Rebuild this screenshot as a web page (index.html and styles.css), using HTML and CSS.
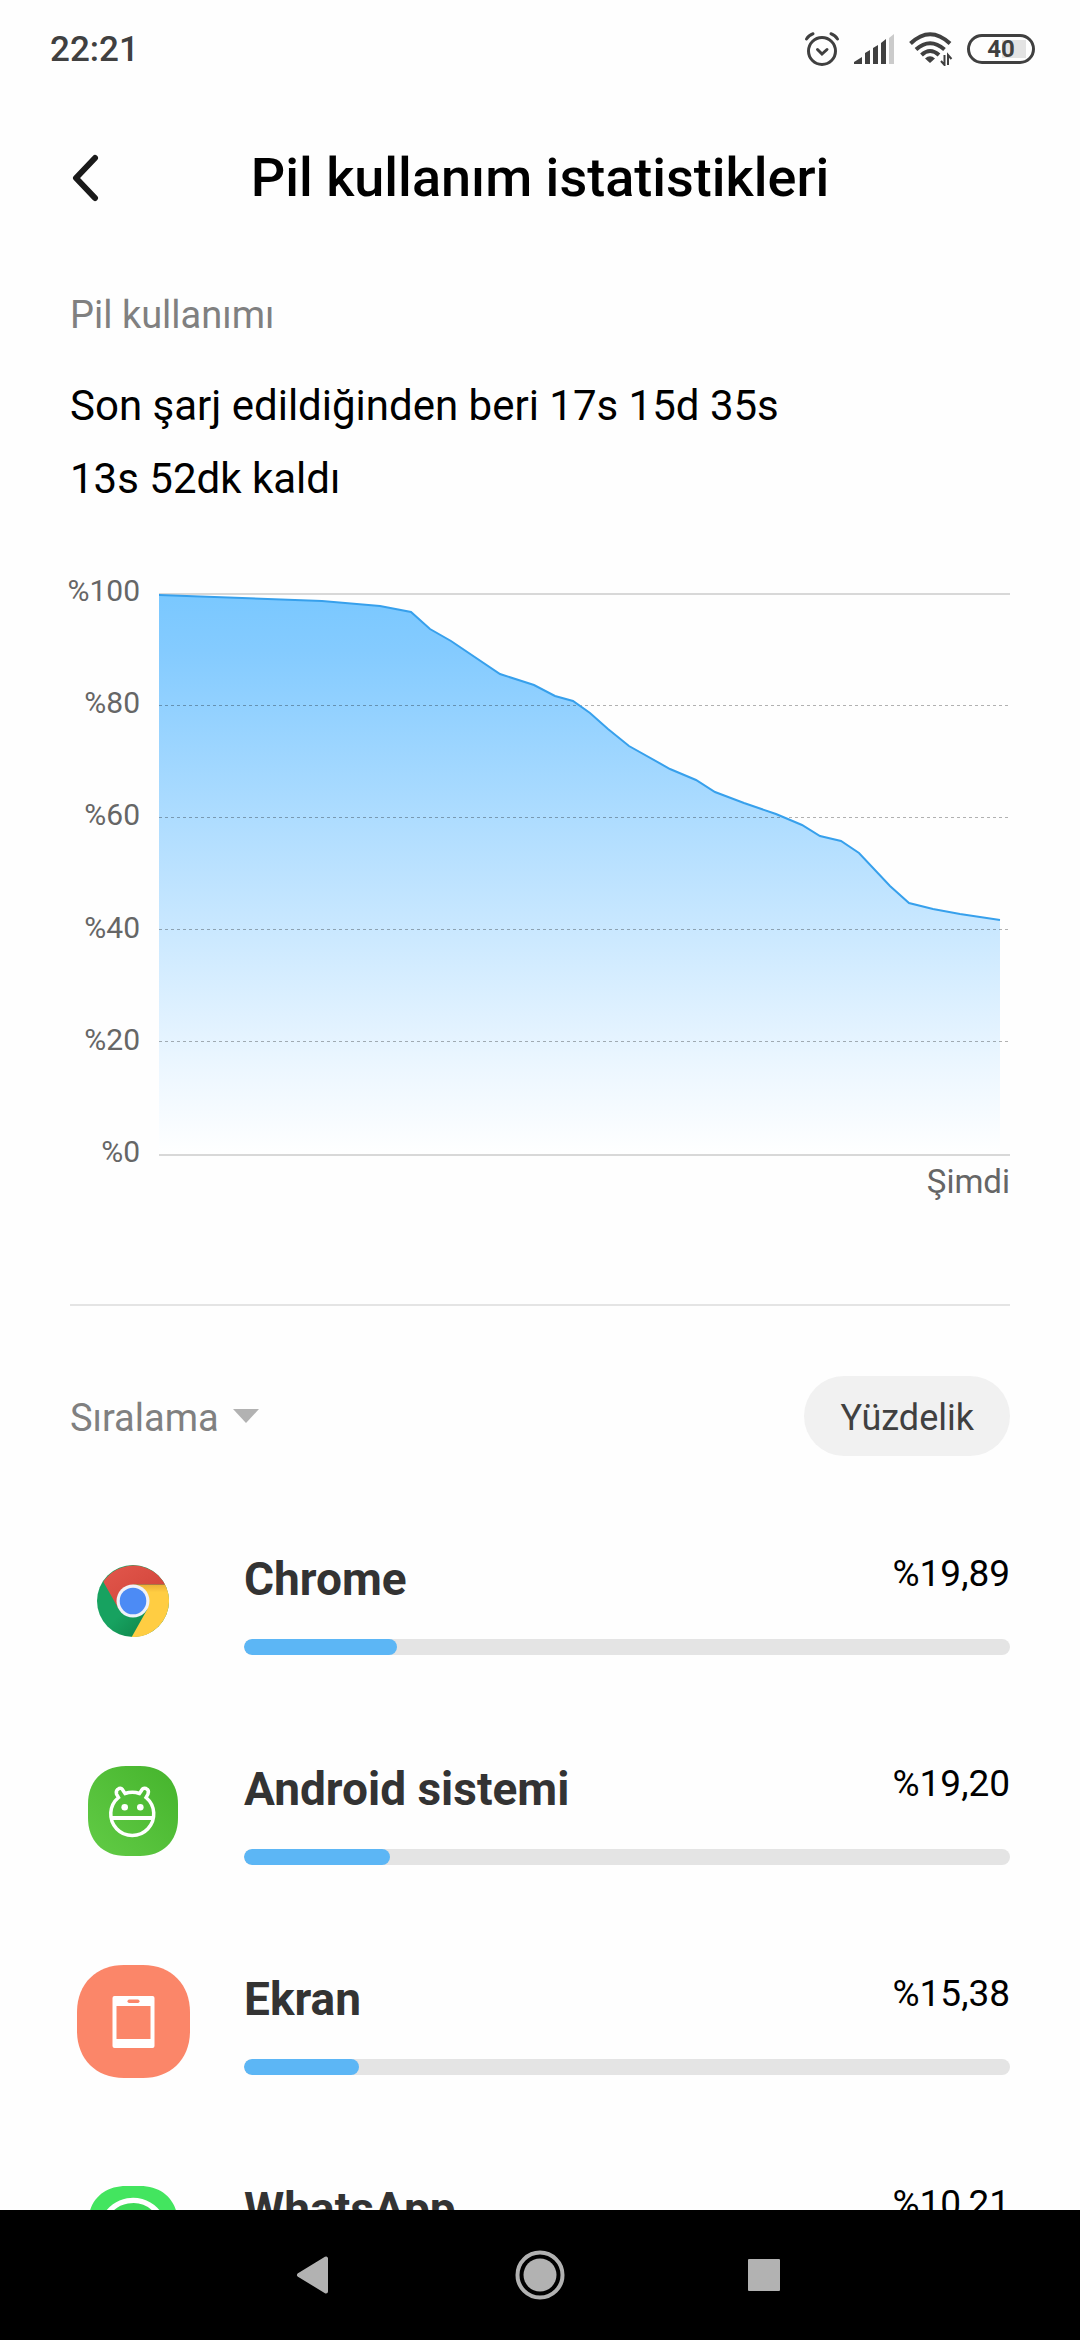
FILE: index.html
```html
<!DOCTYPE html>
<html lang="tr">
<head>
    <meta charset="UTF-8">
    <meta name="viewport" content="width=device-width, initial-scale=1.0">
    <title>Pil kullanım istatistikleri</title>
    <link rel="stylesheet" href="styles.css">
</head>
<body>
<div class="status-bar">
    <span class="clock">22:21</span>
    <div class="status-icons">
        <svg width="36" height="36" viewBox="0 0 36 36" fill="none" stroke="#404040" stroke-width="3" stroke-linecap="round">
            <circle cx="18" cy="20" r="13.5"/>
            <path d="M13.5 18.5l4.5 4.5 5-4.5M2.5 8Q5 4 9 2.8M27 2.8Q31 4 33.5 8"/>
        </svg>
        <svg width="41" height="30" viewBox="0 0 41 30" fill="#404040">
            <path d="M0 30v-2l8-5v7zM11 30V19l5-3v14zM19 30V14l5-3v19zM27 30V9l5-4v25z"/>
            <path d="M35 30V4l5-4v30z" fill="#cbcbcb"/>
        </svg>
        <svg width="44" height="34" viewBox="0 0 44 34" fill="none" stroke="#404040" stroke-width="4">
            <path d="M1.5 11.5Q21 -7 41 11.5M7 17.5Q21 5 35.5 17.5M12.5 23Q21 15 30 23"/>
            <path d="M21 31l-5-4.5Q21 22 26 26.500z" fill="#404040" stroke="none"/>
            <path d="M35.5 23v10l-3.500-4M39 33V23l3.500 4" stroke-width="2"/>
        </svg>
        <span class="battery">40</span>
    </div>
</div>

<header class="header">
    <button class="back" aria-label="Geri">
        <svg width="32" height="48" viewBox="0 0 32 48" fill="none" stroke="#1a1a1a" stroke-width="6" stroke-linecap="round" stroke-linejoin="round">
            <path d="M25 4L6 24l19 20"/>
        </svg>
    </button>
    <h1>Pil kullanım istatistikleri</h1>
</header>

<main class="content">
    <h2 class="section-title">Pil kullanımı</h2>
    <p class="summary">Son şarj edildiğinden beri 17s 15d 35s<br>13s 52dk kaldı</p>

    <div class="chart">
        <div class="chart-labels">
            <span>%100</span>
            <span>%80</span>
            <span>%60</span>
            <span>%40</span>
            <span>%20</span>
            <span>%0</span>
        </div>
        <svg class="plot" viewBox="0 0 851 563" preserveAspectRatio="none">
            <defs>
                <linearGradient id="fill" x1="0" y1="0" x2="0" y2="1">
                    <stop offset="0" stop-color="#7ac8ff"/>
                    <stop offset="0.1" stop-color="#84cbff"/>
                    <stop offset="0.6" stop-color="#cae8ff"/>
                    <stop offset="0.85" stop-color="#edf7ff"/>
                    <stop offset="1" stop-color="#ffffff"/>
                </linearGradient>
            </defs>
            <path class="axis" d="M0 1H851"/>
            <path fill="url(#fill)" d="M0 2L163 8 221 13 252 19 271 36 292 48 341 81 375 92 396 103 414 108 431 120 449 136 470 153 511 176 537 187 556 199 585 210 617 221 643 232 661 243 682 248 700 260 731 293 750 310 774 316 801 321 841 327V562H0z"/>
            <path class="grid" d="M0 112.5H851M0 224.5H851M0 336.5H851M0 448.5H851"/>
            <path class="axis" d="M0 562H851"/>
            <path class="level" d="M0 2L163 8 221 13 252 19 271 36 292 48 341 81 375 92 396 103 414 108 431 120 449 136 470 153 511 176 537 187 556 199 585 210 617 221 643 232 661 243 682 248 700 260 731 293 750 310 774 316 801 321 841 327"/>
        </svg>
    </div>
    <p class="now">Şimdi</p>

    <div class="toolbar">
        <label class="sort">
            <select aria-label="Sıralama">
                <option>Sıralama</option>
            </select>
            <svg width="26" height="14" viewBox="0 0 26 14"><path d="M0 0h26L13 14z" fill="#b2b2b2"/></svg>
        </label>
        <button class="mode">Yüzdelik</button>
    </div>

    <ul class="apps">
        <li class="app">
            <div class="app-icon">
                <svg width="72" height="72" viewBox="0 0 72 72">
                    <defs>
                        <linearGradient id="redShade" x1="0" y1="0" x2="1" y2="1">
                            <stop offset="0" stop-color="#e2574c"/>
                            <stop offset="1" stop-color="#cf4237"/>
                        </linearGradient>
                        <linearGradient id="greenShade" x1="0" y1="0" x2="1" y2="1">
                            <stop offset="0.5" stop-color="#17a260"/>
                            <stop offset="0.9" stop-color="#0d7f46"/>
                        </linearGradient>
                        <linearGradient id="yellowShade" x1="0" y1="0" x2="0" y2="1">
                            <stop offset="0" stop-color="#eab036"/>
                            <stop offset="0.15" stop-color="#ffcd42"/>
                        </linearGradient>
                    </defs>
                    <circle cx="36" cy="36" r="36" fill="url(#greenShade)"/>
                    <path d="M36 19.5H68A36 36 0 0 1 34.7 72L50.3 44.3 36 36z" fill="url(#yellowShade)"/>
                    <path d="M6.3 16.7A36 36 0 0 1 68 19.5H36V36L21.7 44z" fill="url(#redShade)"/>
                    <circle cx="36" cy="36" r="16.5" fill="#f0f2f8"/>
                    <circle cx="36" cy="36" r="13.3" fill="#4c8bf5"/>
                </svg>
            </div>
            <div class="app-info">
                <div class="app-text"><span class="name">Chrome</span><span class="percent">%19,89</span></div>
                <div class="bar"><div class="bar-fill" style="width: 20%"></div></div>
            </div>
        </li>
        <li class="app">
            <div class="app-icon">
                <svg width="90" height="90" viewBox="0 0 90 90">
                    <defs>
                        <linearGradient id="green" x1="0" y1="1" x2="1" y2="0">
                            <stop offset="0.1" stop-color="#5fc943"/>
                            <stop offset="0.9" stop-color="#48b62f"/>
                        </linearGradient>
                    </defs>
                    <path d="M38 0H52C76 0 90 16 90 38V52C90 76 74 90 52 90H38C14 90 0 74 0 52V38C0 14 16 0 38 0z" fill="url(#green)"/>
                    <g fill="none" stroke="#fff" stroke-width="3.5">
                        <path d="M30.5 31.5L28.5 28Q27.5 24 31 22.5 34 21.5 35 24.5L37 27.5Q44.5 25 51.5 27.5L53.5 24.5Q55 21.5 58 22.5 61.5 24 60 28L58 31.5A21.5 21.5 0 1 1 30.5 31.5z"/>
                        <path d="M23 52H66" stroke-width="4"/>
                    </g>
                    <circle cx="36.7" cy="41.3" r="3.3" fill="#fff"/>
                    <circle cx="52.3" cy="41.3" r="3.3" fill="#fff"/>
                </svg>
            </div>
            <div class="app-info">
                <div class="app-text"><span class="name">Android sistemi</span><span class="percent">%19,20</span></div>
                <div class="bar"><div class="bar-fill" style="width: 19%"></div></div>
            </div>
        </li>
        <li class="app">
            <div class="app-icon">
                <svg width="113" height="113" viewBox="0 0 113 113">
                    <path d="M47 0H66C95 0 113 20 113 47V66C113 95 93 113 66 113H47C18 113 0 93 0 66V47C0 18 20 0 47 0z" fill="#fb8669"/>
                    <rect x="35.5" y="31" width="42" height="52" rx="2" fill="#fff"/>
                    <rect x="39.5" y="41" width="34" height="33" fill="#fb8669"/>
                    <rect x="50.5" y="34.5" width="12" height="3.5" rx="1.7" fill="#fb8669"/>
                </svg>
            </div>
            <div class="app-info">
                <div class="app-text"><span class="name">Ekran</span><span class="percent">%15,38</span></div>
                <div class="bar"><div class="bar-fill" style="width: 15%"></div></div>
            </div>
        </li>
        <li class="app">
            <div class="app-icon">
                <svg width="90" height="90" viewBox="0 0 90 90">
                    <path d="M38 0H52C76 0 90 16 90 38V52C90 76 74 90 52 90H38C14 90 0 74 0 52V38C0 14 16 0 38 0z" fill="#43e55f"/>
                    <path d="M18 62A31.5 31.5 0 1 1 29 73L14 77z" fill="#3ddb57" stroke="#fff" stroke-width="5.5"/>
                    <path d="M33 30c-6 5-4 14 4 22s18 12 23 6c3-5 0-6-6-9-3-1-4 4-6 4-4-1-9-6-10-10 0-2 4-3 3-6-2-5-4-9-8-7z" fill="#fff"/>
                </svg>
            </div>
            <div class="app-info">
                <div class="app-text"><span class="name">WhatsApp</span><span class="percent">%10,21</span></div>
                <div class="bar"><div class="bar-fill" style="width: 10%"></div></div>
            </div>
        </li>
    </ul>
</main>

<nav class="nav-bar">
    <button aria-label="Geri">
        <svg width="56" height="56" viewBox="0 0 56 56"><path d="M11 28L38 11.5V44.5z" fill="#b2b2b2" stroke="#b2b2b2" stroke-width="4" stroke-linejoin="round"/></svg>
    </button>
    <button aria-label="Ana ekran">
        <svg width="56" height="56" viewBox="0 0 56 56"><circle cx="28" cy="28" r="22.5" fill="none" stroke="#b2b2b2" stroke-width="4"/><circle cx="28" cy="28" r="16.5" fill="#b2b2b2"/></svg>
    </button>
    <button aria-label="Son uygulamalar">
        <svg width="56" height="56" viewBox="0 0 56 56"><rect x="12" y="12" width="32" height="32" rx="1" fill="#b2b2b2"/></svg>
    </button>
</nav>
</body>
</html>
```
FILE: styles.css
```css
* {
    box-sizing: border-box;
}
html, body {
    height: 100%;
    margin: 0;
    padding: 0;
}
body {
    display: flex;
    flex-direction: column;
    overflow: hidden;
    background-color: #fefefe;
    color: #000;
    font-family: Roboto, sans-serif;
}
h1, h2, p, ul {
    margin: 0;
    padding: 0;
}
button, select {
    border: none;
    background: none;
    padding: 0;
    font-family: inherit;
}
svg {
    display: block;
}

.status-bar {
    display: flex;
    flex-shrink: 0;
    align-items: center;
    justify-content: space-between;
    height: 98px;
    padding: 0 45px 0 50px;
    color: #404040;
}
.clock {
    font-size: 35px;
    font-weight: 500;
}
.status-icons {
    display: flex;
    align-items: center;
    gap: 14px;
}
.battery {
    width: 68px;
    height: 30px;
    border: 3px solid #404040;
    border-radius: 15px;
    background: linear-gradient(#e3e3e3, #e3e3e3) 32px 3px / 24px 18px no-repeat;
    font-size: 24px;
    font-weight: 700;
    line-height: 24px;
    text-align: center;
}

.header {
    display: grid;
    flex-shrink: 0;
    grid-template-columns: 60px 1fr 60px;
    align-items: center;
    height: 159px;
    padding: 0 70px;
}
.header h1 {
    font-size: 54px;
    font-weight: 500;
    text-align: center;
}

.content {
    flex: 1;
    min-height: 0;
    overflow-y: auto;
    scrollbar-width: none;
    padding: 30px 70px 0;
}
.section-title {
    color: #808080;
    font-size: 38px;
    font-weight: 400;
    line-height: 56px;
}
.summary {
    margin-top: 26px;
    font-size: 42px;
    line-height: 73px;
}

.chart {
    display: grid;
    grid-template-columns: 70px 1fr;
    gap: 19px;
    margin-top: 78px;
}
.chart-labels {
    display: flex;
    flex-direction: column;
    align-items: flex-end;
    justify-content: space-between;
    margin: -20px 0 -14px;
    color: #666;
    font-size: 30px;
    line-height: 36px;
}
.plot {
    width: 100%;
    height: 563px;
}
.axis {
    stroke: #d8d8d8;
    stroke-width: 2;
}
.grid {
    stroke: rgba(0, 0, 0, 0.3);
    stroke-width: 1;
    stroke-dasharray: 3 3;
}
.level {
    fill: none;
    stroke: #37a0ec;
    stroke-width: 2;
}
.now {
    margin-top: 6px;
    padding-bottom: 102px;
    border-bottom: 2px solid #e4e4e4;
    color: #666;
    font-size: 33px;
    line-height: 40px;
    text-align: right;
}

.toolbar {
    display: flex;
    align-items: center;
    justify-content: space-between;
    margin: 70px 0 40px;
}
.sort {
    display: flex;
    align-items: center;
    gap: 14px;
}
.sort select {
    appearance: none;
    padding-top: 4px;
    color: #808080;
    font-size: 38px;
}
.mode {
    height: 80px;
    padding: 4px 36px 0;
    border-radius: 40px;
    background-color: #f1f1f1;
    color: #404040;
    font-size: 36px;
}

.apps {
    list-style: none;
}
.app {
    display: grid;
    grid-template-columns: 126px 1fr;
    gap: 48px;
    height: 210px;
}
.app-icon {
    display: flex;
    align-items: center;
    justify-content: center;
}
.app-info {
    padding-top: 56px;
}
.app-text {
    display: flex;
    align-items: flex-start;
    justify-content: space-between;
}
.name {
    color: #333;
    font-size: 46px;
    font-weight: 700;
    line-height: 54px;
}
.percent {
    font-size: 37px;
    line-height: 44px;
}
.bar {
    height: 16px;
    margin-top: 33px;
    overflow: hidden;
    border-radius: 8px;
    background-color: #e4e4e4;
}
.bar-fill {
    height: 100%;
    border-radius: 8px;
    background-color: #5cb6f5;
}

.nav-bar {
    display: flex;
    flex-shrink: 0;
    justify-content: center;
    height: 130px;
    background-color: #000;
}
.nav-bar button {
    display: flex;
    align-items: center;
    justify-content: center;
    width: 224px;
}
```
